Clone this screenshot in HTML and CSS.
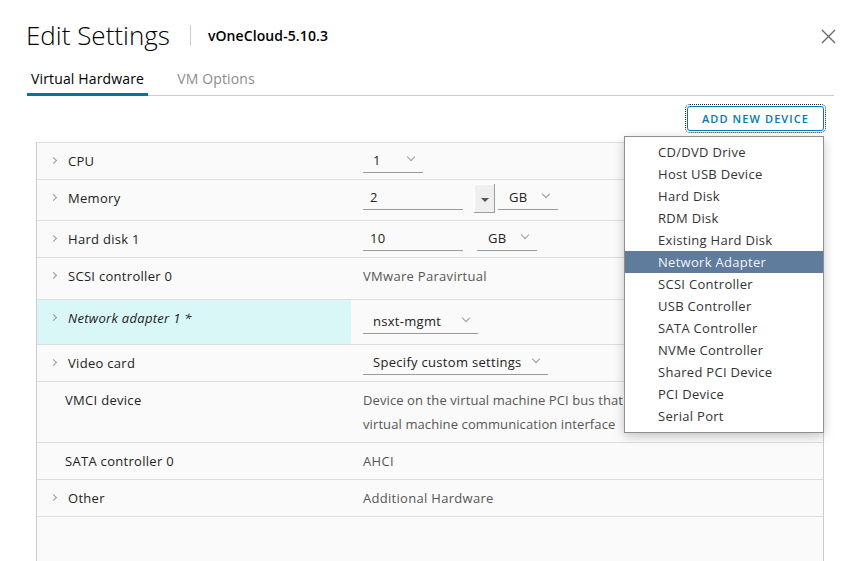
FILE: index.html
```html
<!DOCTYPE html>
<html lang="en">
<head>
<meta charset="utf-8">
<title>Edit Settings</title>
<link rel="stylesheet" href="styles.css">
</head>
<body>
<div class="modal">
  <header class="head">
    <h1 class="title">Edit Settings</h1>
    <span class="sep"></span>
    <span class="sub">vOneCloud-5.10.3</span>
    <span class="close" aria-label="Close">
      <svg width="15" height="15" viewBox="0 0 15 15"><path d="M1 1 L14 14 M14 1 L1 14" stroke="#6a6a6a" stroke-width="1.4" fill="none"/></svg>
    </span>
  </header>

  <nav class="tabs">
    <span class="tab active">Virtual Hardware</span>
    <span class="tab">VM Options</span>
  </nav>

  <div class="toolbar">
    <div class="add-wrap">
      <button class="add">ADD NEW DEVICE</button>
      <ul class="menu">
        <li class="item">CD/DVD Drive</li>
        <li class="item">Host USB Device</li>
        <li class="item">Hard Disk</li>
        <li class="item">RDM Disk</li>
        <li class="item">Existing Hard Disk</li>
        <li class="item selected">Network Adapter</li>
        <li class="item">SCSI Controller</li>
        <li class="item">USB Controller</li>
        <li class="item">SATA Controller</li>
        <li class="item">NVMe Controller</li>
        <li class="item">Shared PCI Device</li>
        <li class="item">PCI Device</li>
        <li class="item">Serial Port</li>
      </ul>
    </div>
  </div>

  <div class="hw">
    <div class="row">
      <div class="label"><span class="chev"></span>CPU</div>
      <div class="value">
        <span class="select w-cpu">1<span class="caret"></span></span>
      </div>
    </div>
    <div class="row r-mem">
      <div class="label"><span class="chev"></span>Memory</div>
      <div class="value ctl">
        <span class="input w-num">2</span>
        <span class="spin"><span class="tri"></span></span>
        <span class="select w-gb gb-mem">GB<span class="caret"></span></span>
      </div>
    </div>
    <div class="row">
      <div class="label"><span class="chev"></span>Hard disk 1</div>
      <div class="value ctl">
        <span class="input w-num">10</span>
        <span class="select w-gb gb-disk">GB<span class="caret"></span></span>
      </div>
    </div>
    <div class="row r-scsi">
      <div class="label"><span class="chev"></span>SCSI controller 0</div>
      <div class="value text">VMware Paravirtual</div>
    </div>
    <div class="row r-net">
      <div class="label changed"><span class="chev"></span><em>Network adapter 1 *</em></div>
      <div class="value net">
        <span class="select w-net">nsxt-mgmt<span class="caret"></span></span>
      </div>
    </div>
    <div class="row">
      <div class="label"><span class="chev"></span>Video card</div>
      <div class="value">
        <span class="select w-video">Specify custom settings<span class="caret"></span></span>
      </div>
    </div>
    <div class="row r-vmci">
      <div class="label plain">VMCI device</div>
      <div class="value text"><div class="desc">Device on the virtual machine PCI bus that<br>virtual machine communication interface</div></div>
    </div>
    <div class="row">
      <div class="label plain">SATA controller 0</div>
      <div class="value text">AHCI</div>
    </div>
    <div class="row">
      <div class="label"><span class="chev"></span>Other</div>
      <div class="value text">Additional Hardware</div>
    </div>
    <div class="filler"></div>
  </div>
</div>
</body>
</html>
```

FILE: styles.css
```css
* { box-sizing: border-box; }

html, body {
  margin: 0;
  padding: 0;
  background: #fff;
  font-family: "Open Sans", "Noto Sans", sans-serif;
  color: #333;
  overflow: hidden;
}

.modal {
  width: 860px;
  height: 561px;
  overflow: hidden;
}

/* header */
.head {
  display: flex;
  align-items: center;
  height: 70px;
  padding: 0 24px 0 26px;
}
.title {
  margin: 0;
  font-size: 26px;
  font-weight: 300;
  color: #000;
  line-height: 30px;
}
.sep {
  width: 1px;
  height: 21px;
  background: #ccc;
  margin-left: 20px;
}
.sub {
  margin-left: 17px;
  font-size: 14px;
  font-weight: 600;
  color: #000;
  letter-spacing: 0.1px;
}
.close {
  margin-left: auto;
  display: flex;
  margin-top: 3px;
}

/* tabs */
.tabs {
  display: flex;
  gap: 25px;
  margin: 0 26px 0 27px;
  border-bottom: 1px solid #ccc;
}
.tab {
  font-size: 14px;
  line-height: 18px;
  padding: 0 4px 5px;
  color: #8c8c8c;
  letter-spacing: 0.15px;
  border-bottom: 3px solid transparent;
  margin-bottom: -1px;
}
.tab.active {
  color: #000;
  border-bottom-color: #0072a3;
}

/* toolbar & menu */
.toolbar {
  display: flex;
  justify-content: flex-end;
  padding: 10px 36px 0 0;
}
.add-wrap {
  position: relative;
}
.add {
  display: block;
  height: 25px;
  width: 137px;
  padding: 0;
  border: 1px solid #0079b8;
  border-radius: 3px;
  background: #fff;
  color: #0079b8;
  font-family: "Open Sans", sans-serif;
  font-size: 11px;
  font-weight: 600;
  letter-spacing: 1.1px;
  outline: 1px dotted #222;
  outline-offset: 1px;
}
.menu {
  position: absolute;
  right: 0;
  top: 30px;
  width: 200px;
  margin: 0;
  padding: 4px 0 5px;
  list-style: none;
  background: #fff;
  border: 1px solid #8e8e8e;
  box-shadow: 0 3px 10px rgba(0, 0, 0, 0.22);
  z-index: 10;
}
.item {
  height: 22px;
  line-height: 22px;
  padding-left: 33px;
  font-size: 13px;
  letter-spacing: 0.3px;
  color: #333;
  white-space: nowrap;
}
.item.selected {
  background: #5f7c9c;
  color: #f0f4f8;
}

/* hardware table */
.hw {
  margin: 11px 0 0 36px;
  width: 788px;
  background: #fafafa;
  border-left: 1px solid #ccc;
  border-right: 1px solid #ccc;
  border-top: 1px solid #ddd;
}
.row {
  display: grid;
  grid-template-columns: 314px 1fr;
  height: 37px;
  border-bottom: 1px solid #ddd;
}
.r-mem { height: 41px; }
.r-scsi { height: 42px; }
.r-net { height: 45px; }
.r-vmci { height: 61px; }

.label {
  display: flex;
  align-items: flex-start;
  padding: 9px 0 0 13px;
  font-size: 13px;
  line-height: 18px;
  letter-spacing: 0.3px;
  color: #222;
}
.label.plain { padding-left: 28px; }
.label.changed { background: #d9f7f6; }
.label em { font-style: italic; }

.chev {
  width: 18px;
  height: 18px;
  flex: none;
  position: relative;
}
.chev::before {
  content: "";
  position: absolute;
  left: 1px;
  top: 6px;
  width: 4px;
  height: 4px;
  border-right: 1px solid #999;
  border-top: 1px solid #999;
  transform: rotate(45deg);
}

.value {
  padding-left: 12px;
  font-size: 13px;
  line-height: 18px;
  letter-spacing: 0.3px;
  color: #222;
}
.value.text {
  padding-top: 9px;
  color: #565656;
}
.desc {
  margin-top: -3px;
  line-height: 24px;
  letter-spacing: 0.1px;
  white-space: nowrap;
}
.value.ctl {
  display: flex;
  align-items: flex-start;
}

.select, .input {
  display: inline-flex;
  align-items: center;
  height: 25px;
  margin-top: 5px;
  border-bottom: 1px solid #9a9a9a;
  color: #222;
  padding-bottom: 1px;
}
.select {
  justify-content: space-between;
  padding-left: 10px;
  padding-right: 7px;
}
.input { padding-left: 7px; }
.net .select { margin-top: 9px; }

.caret {
  width: 9px;
  height: 6px;
  position: relative;
}
.caret::before {
  content: "";
  position: absolute;
  left: 1px;
  top: -3px;
  width: 5px;
  height: 5px;
  border-right: 1px solid #9a9a9a;
  border-bottom: 1px solid #9a9a9a;
  transform: rotate(45deg);
}

.w-cpu { width: 60px; }
.w-num { width: 100px; }
.w-gb { width: 60px; padding-left: 11px; }
.gb-disk { margin-left: 14px; }
.gb-mem { margin-left: 3px; }
.w-net { width: 115px; }
.w-video { width: 185px; }

.spin {
  width: 21px;
  height: 29px;
  margin: 4px 0 0 11px;
  background: #efefef;
  box-shadow: inset -1px -1px 0 #9c9c9c, inset 1px 1px 0 #fdfdfd;
  display: flex;
  align-items: center;
  justify-content: center;
}
.tri {
  width: 0;
  height: 0;
  border-left: 4px solid transparent;
  border-right: 4px solid transparent;
  border-top: 4px solid #555;
  margin-top: 2px;
}

.filler { height: 80px; }
```
